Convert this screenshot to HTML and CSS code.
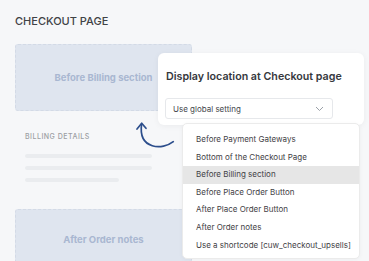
FILE: index.html
```html
<!DOCTYPE html>
<html>
<head>
<meta charset="utf-8">
<link rel="stylesheet" href="styles.css">
</head>
<body>
<div class="page">
  <h1 class="title">CHECKOUT PAGE</h1>
  <div class="slot">Before Billing section</div>
  <div class="billing">
    <div class="billing-label">BILLING DETAILS</div>
    <div class="bar"></div>
    <div class="bar"></div>
    <div class="bar bar-short"></div>
  </div>
  <div class="slot slot-bottom">After Order notes</div>

  <svg class="arrow" width="50" height="45" viewBox="0 0 50 45">
    <path d="M43.3 31.7 C 33 40, 8 40, 11.6 14" fill="none" stroke="#2c4e8c" stroke-width="1.7" stroke-linecap="round"/>
    <path d="M7 19 L11.7 13.2 L16 18.3" fill="none" stroke="#2c4e8c" stroke-width="1.7" stroke-linecap="round" stroke-linejoin="round"/>
  </svg>

  <div class="panel">
    <div class="panel-title">Display location at Checkout page</div>
    <div class="select">
      <span>Use global setting</span>
      <svg class="chev" width="9" height="6" viewBox="0 0 9 6"><path d="M1 1 L4.5 4.5 L8 1" fill="none" stroke="#9aa0a8" stroke-width="1"/></svg>
    </div>
  </div>

  <ul class="menu">
    <li>Before Payment Gateways</li>
    <li>Bottom of the Checkout Page</li>
    <li class="active">Before Billing section</li>
    <li>Before Place Order Button</li>
    <li>After Place Order Button</li>
    <li>After Order notes</li>
    <li>Use a shortcode [cuw_checkout_upsells]</li>
  </ul>
</div>
</body>
</html>
```
FILE: styles.css
```css
html, body {
  margin: 0;
  padding: 0;
  background: #f6f7f9;
}
body {
  width: 369px;
  height: 261px;
  overflow: hidden;
  font-family: Inter, "Noto Sans", sans-serif;
}
.page {
  position: relative;
  height: 261px;
  box-sizing: border-box;
  padding: 14px 15px 0 15px;
  overflow: hidden;
}
.title {
  margin: 0 0 16px 0;
  font-size: 11px;
  line-height: 14px;
  font-weight: 500;
  color: #3f4246;
}
.slot {
  box-sizing: border-box;
  width: 177px;
  height: 67px;
  background: #dfe5ef;
  border: 1px dashed #d3dae6;
  border-radius: 3px;
  display: flex;
  align-items: center;
  justify-content: center;
  font-size: 9.5px;
  font-weight: 700;
  color: #a9b7d1;
}
.slot-bottom {
  height: 53px;
  border-bottom: none;
  border-radius: 3px 3px 0 0;
  padding-top: 7px;
}
.billing {
  padding: 21px 0 0 10px;
  margin-bottom: 27px;
}
.billing-label {
  font-size: 7px;
  line-height: 9px;
  font-weight: 500;
  color: #9b9ea3;
  letter-spacing: 0.5px;
  margin-bottom: 13px;
}
.bar {
  width: 127px;
  height: 4px;
  border-radius: 2px;
  background: #eaecef;
  margin-bottom: 8px;
}
.bar-short {
  width: 94px;
  margin-bottom: 0;
}
.arrow {
  position: absolute;
  left: 130px;
  top: 110px;
}
.panel {
  position: absolute;
  left: 158px;
  top: 53px;
  width: 206px;
  height: 72px;
  box-sizing: border-box;
  background: #ffffff;
  border-radius: 6px;
  box-shadow: 0 1px 6px rgba(0, 0, 0, 0.05);
  padding: 17px 0 0 7px;
}
.panel-title {
  font-size: 10.7px;
  line-height: 14px;
  font-weight: 600;
  color: #35383d;
  padding-left: 1px;
  margin-bottom: 14px;
}
.select {
  box-sizing: border-box;
  width: 168px;
  height: 21px;
  border: 1px solid #e6e8eb;
  border-radius: 3px;
  display: flex;
  align-items: center;
  justify-content: space-between;
  padding: 0 8px 0 7px;
  font-size: 8px;
  color: #45484d;
}
.chev {
  display: block;
}
.menu {
  position: absolute;
  left: 182px;
  top: 123px;
  width: 178px;
  height: 136px;
  box-sizing: border-box;
  margin: 0;
  padding: 7px 0 0 0;
  list-style: none;
  background: #ffffff;
  border: 1px solid #ebebeb;
  border-radius: 5px;
  box-shadow: 0 1px 4px rgba(0, 0, 0, 0.04);
}
.menu li {
  height: 17.6px;
  line-height: 17.6px;
  padding-left: 13px;
  font-size: 8px;
  color: #3f4145;
}
.menu li.active {
  background: #e6e6e6;
}
```
